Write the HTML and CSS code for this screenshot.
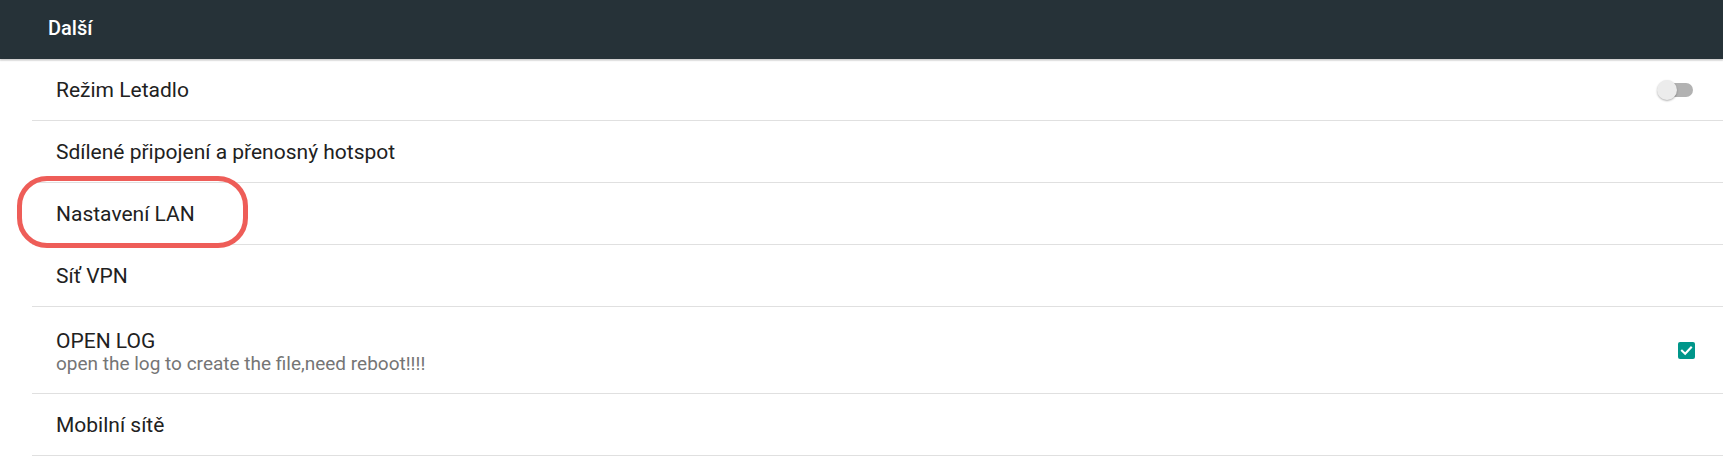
FILE: index.html
```html
<!DOCTYPE html>
<html lang="cs">
<head>
<meta charset="utf-8">
<title>Další</title>
<link rel="stylesheet" href="styles.css">
</head>
<body>
<header class="appbar"><h1 class="appbar-title">Další</h1></header>
<ul class="prefs">
  <li class="pref">
    <span class="pref-title">Režim Letadlo</span>
    <span class="switch"><span class="switch-track"></span><span class="switch-thumb"></span></span>
  </li>
  <li class="pref">
    <span class="pref-title">Sdílené připojení a přenosný hotspot</span>
  </li>
  <li class="pref pref-marked">
    <span class="pref-title">Nastavení LAN</span>
    <span class="annotation"></span>
  </li>
  <li class="pref">
    <span class="pref-title">Síť VPN</span>
  </li>
  <li class="pref pref-tall">
    <span class="pref-text">
      <span class="pref-title">OPEN LOG</span>
      <span class="pref-summary">open the log to create the file,need reboot!!!!</span>
    </span>
    <span class="checkbox">
      <svg viewBox="0 0 17 17" width="17" height="17"><path d="M4 8.7 L7.2 11.8 L13 5.6" fill="none" stroke="#fff" stroke-width="2.1" stroke-linecap="square"/></svg>
    </span>
  </li>
  <li class="pref">
    <span class="pref-title">Mobilní sítě</span>
  </li>
</ul>
</body>
</html>
```
FILE: styles.css
```css
* { box-sizing: border-box; }
html, body { margin: 0; padding: 0; background: #fff; }
body { font-family: Roboto, "Noto Sans", sans-serif; color: #212121; }

.appbar {
  height: 59px;
  background: #263238;
  display: flex;
  align-items: center;
  padding-left: 48px;
  box-shadow: 0 1px 2px rgba(0,0,0,0.18), 0 2px 1px rgba(0,0,0,0.06);
  position: relative;
  z-index: 1;
}
.appbar-title {
  margin: 0;
  font-size: 20px;
  font-weight: 500;
  color: #fff;
  line-height: 1;
  position: relative;
  top: -2px;
}

.prefs {
  list-style: none;
  margin: 0 0 0 32px;
  padding: 0;
}
.pref {
  position: relative;
  display: flex;
  align-items: center;
  justify-content: space-between;
  min-height: 62px;
  padding: 0 28px 0 24px;
  border-bottom: 1px solid #e0e0e0;
}
.pref-tall { min-height: 87px; }
.pref-title {
  font-size: 21px;
  line-height: 24px;
  color: #212121;
}
.pref-text { display: flex; flex-direction: column; padding-top: 3px; }
.pref-summary {
  font-size: 19px;
  line-height: 22px;
  color: #757575;
}

.switch {
  position: relative;
  width: 36px;
  height: 20px;
  margin-right: 2px;
}
.switch-track {
  position: absolute;
  left: 2px;
  top: 3px;
  width: 34px;
  height: 14px;
  border-radius: 7px;
  background: #b2b2b2;
}
.switch-thumb {
  position: absolute;
  left: 0;
  top: 0;
  width: 20px;
  height: 20px;
  border-radius: 50%;
  background: #ececec;
  box-shadow: 0 1px 2px rgba(0,0,0,0.3);
}

.checkbox {
  width: 17px;
  height: 17px;
  border-radius: 2px;
  background: #00968a;
  display: flex;
}

.annotation {
  position: absolute;
  left: -15px;
  top: -7px;
  width: 231px;
  height: 72px;
  border: 5px solid #ee5d58;
  border-radius: 30px;
  pointer-events: none;
}
```
